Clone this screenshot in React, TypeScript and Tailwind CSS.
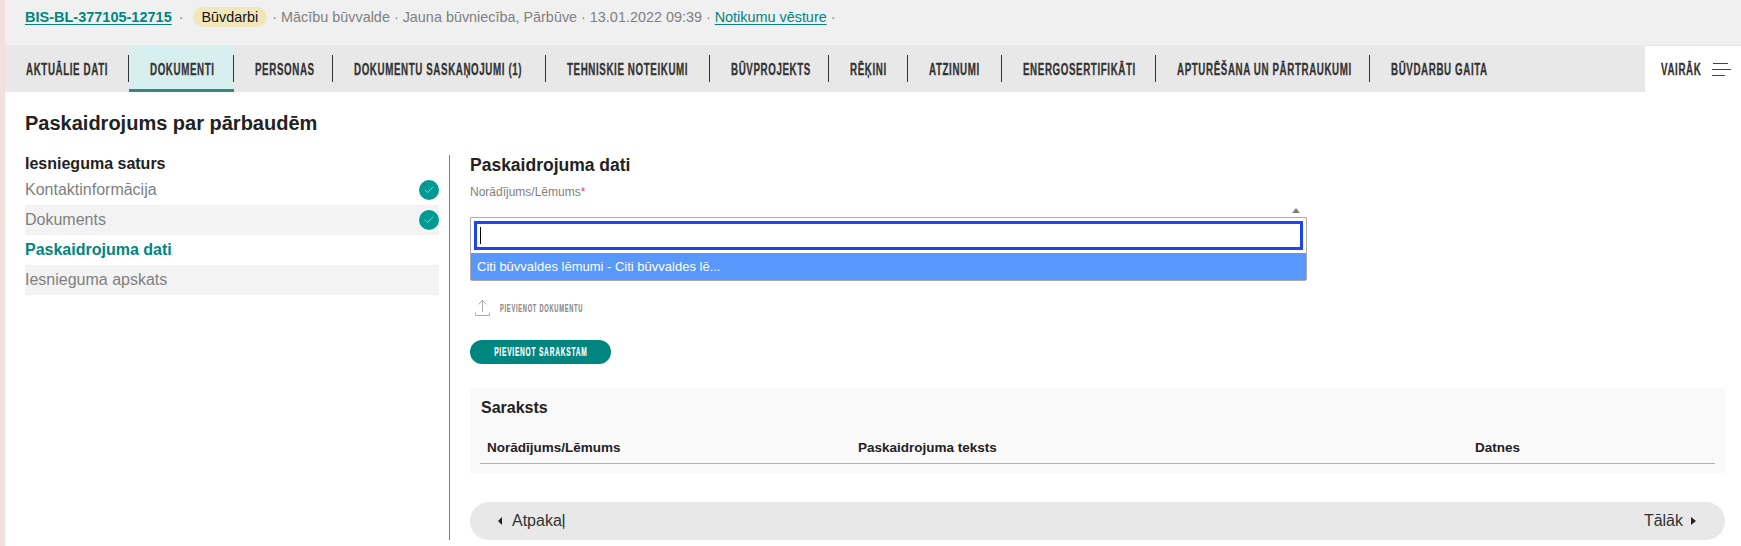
import React from 'react';
import { Check } from 'lucide-react';

const tabs = [
  { label: 'AKTUĀLIE DATI', cls: 'w-[124px]' },
  { label: 'DOKUMENTI', cls: 'w-[105px]', active: true },
  { label: 'PERSONAS', cls: 'w-[99px]' },
  { label: 'DOKUMENTU SASKAŅOJUMI (1)', cls: 'w-[213px]' },
  { label: 'TEHNISKIE NOTEIKUMI', cls: 'w-[164px]' },
  { label: 'BŪVPROJEKTS', cls: 'w-[119px]' },
  { label: 'RĒĶINI', cls: 'w-[79px]' },
  { label: 'ATZINUMI', cls: 'w-[94px]' },
  { label: 'ENERGOSERTIFIKĀTI', cls: 'w-[154px]' },
  { label: 'APTURĒŠANA UN PĀRTRAUKUMI', cls: 'w-[214px]' },
  { label: 'BŪVDARBU GAITA', cls: 'w-[160px]', last: true },
];

const steps = [
  { label: 'Kontaktinformācija', done: true },
  { label: 'Dokuments', done: true, shaded: true },
  { label: 'Paskaidrojuma dati', current: true },
  { label: 'Iesnieguma apskats', shaded: true },
];

const arial = "font-['Liberation_Sans',Arial,sans-serif]";
const tabText =
  "inline-block origin-left scale-x-[0.61] whitespace-nowrap pt-[2px] text-[16px] font-bold tracking-[1px] text-[#333] [-webkit-text-stroke:0.3px_#333]";

export default function App() {
  return (
    <div className={`h-[546px] w-[1741px] overflow-hidden border-l-[5px] border-[#f3dfdf] bg-white text-[#222] ${arial}`}>
      {/* augšējā josla */}
      <div className="flex h-[45px] items-start bg-[#f0f0f0] pl-[20px] pt-[7px] text-[14.4px] leading-[20px] text-[#808080]">
        <a className="text-[14.5px] font-bold text-[#00857f] underline underline-offset-2">BIS-BL-377105-12715</a>
        <span className="ml-[7px]">·</span>
        <span className="ml-[9px] rounded-full bg-[#f2e6bd] px-[9px] text-[#111]">Būvdarbi</span>
        <span className="ml-[5px]">· Mācību būvvalde · Jauna būvniecība, Pārbūve · 13.01.2022 09:39 ·</span>
        <span className="ml-[4px] text-[#00857f] underline underline-offset-2">Notikumu vēsture</span>
        <span className="ml-[4px]">·</span>
      </div>

      {/* cilnes */}
      <div className="flex h-[47px] bg-[#e8e8e8]">
        <div className="flex flex-1 items-center">
          {tabs.map((t) => (
            <div
              key={t.label}
              className={`${t.cls} flex h-full shrink-0 items-center ${t.active ? 'bg-[#d8efef] shadow-[inset_0_-3px_0_#3a8480]' : ''}`}
            >
              <div className={`flex h-[27px] w-full items-center pl-[21px] ${t.last ? '' : 'border-r border-[#333]'} ${t.label === 'AKTUĀLIE DATI' ? 'pl-[20px]' : ''}`}>
                <span className={tabText}>{t.label}</span>
              </div>
            </div>
          ))}
        </div>
        <div className="mt-px flex w-[96px] items-center bg-white pl-[16px]">
          <span className="w-[40px]">
            <span className={tabText}>VAIRĀK</span>
          </span>
          <svg className="ml-[11px]" width="19" height="14" viewBox="0 0 19 14" fill="none" stroke="#444" strokeWidth="1">
            <path d="M1 1.5h15M0 7.5h19M0 13.5h13" />
          </svg>
        </div>
      </div>

      <div className="pl-[20px]">
        <h1 className="pt-[19px] text-[20px] font-bold leading-[24px] text-[#222]">Paskaidrojums par pārbaudēm</h1>

        <div className="mt-[20px] flex">
          {/* kreisā kolonna */}
          <div className="w-[414px] shrink-0">
            <div className="text-[16px] font-bold leading-[18px]">Iesnieguma saturs</div>
            <div className="mt-[2px]">
              {steps.map((s) => (
                <div
                  key={s.label}
                  className={`flex h-[30px] items-center justify-between text-[16px] ${s.shaded ? 'bg-[#f3f3f3]' : ''} ${s.current ? 'font-bold text-[#00857f]' : 'text-[#808080]'}`}
                >
                  <span>{s.label}</span>
                  {s.done && (
                    <span className="flex h-[20px] w-[20px] items-center justify-center rounded-full bg-[#009a93]">
                      <Check size={12} strokeWidth={1} color="#fff" />
                    </span>
                  )}
                </div>
              ))}
            </div>
          </div>

          {/* labā kolonna */}
          <div className="ml-[10px] h-[385px] flex-1 border-l border-[#808080] pl-[20px]">
            <h2 className="text-[17.5px] font-bold leading-[20px] text-[#222]">Paskaidrojuma dati</h2>
            <div className="mt-[9px] text-[12px] leading-[16px] text-[#808080]">
              Norādījums/Lēmums<span className="text-[#e0408a]">*</span>
            </div>

            <div className="flex h-[17px] w-[837px] items-end justify-end pb-[4px] pr-[7px]">
              <span className="h-0 w-0 border-x-[4px] border-b-[5px] border-x-transparent border-b-[#808080]" />
            </div>

            <div className="w-[837px] rounded-b-[2px] border border-[#aaa] bg-white">
              <div className="p-[3px]">
                <div className="flex h-[29px] items-center border-[3px] border-[#1c44f0] pl-[3px]">
                  <span className="h-[17px] w-px bg-black" />
                </div>
              </div>
              <div className="flex h-[27px] items-center bg-[#5897fb] px-[6px] text-[13px] text-white">
                Citi būvvaldes lēmumi - Citi būvvaldes lē...
              </div>
            </div>

            <div className="mt-[19px] flex h-[16px] items-center pl-[5px]">
              <svg width="15" height="16" viewBox="0 0 15 16" fill="none" stroke="#aaa" strokeWidth="1">
                <path d="M7.5 12V0.5M3.5 4.5l4-4 4 4M0.5 12.5v3h14v-3" />
              </svg>
              <span className="ml-[10px] inline-block origin-left scale-x-[0.52] whitespace-nowrap text-[11px] font-bold tracking-[1.4px] text-[#888] [-webkit-text-stroke:0.2px_#888]">
                PIEVIENOT DOKUMENTU
              </span>
            </div>

            <div className="mt-[24px] flex h-[24px] w-[141px] items-center justify-center rounded-full bg-[#00857f]">
              <span className="inline-block shrink-0 scale-x-[0.55] whitespace-nowrap text-[12px] font-bold tracking-[1.4px] text-white [-webkit-text-stroke:0.2px_#fff]">
                PIEVIENOT SARAKSTAM
              </span>
            </div>

            <div className="mt-[24px] h-[85px] w-[1255px] bg-[#f9f9f9] px-[10px]">
              <div className="pl-[1px] pt-[10px] text-[16px] font-bold leading-[20px]">Saraksts</div>
              <div className="mt-[15px] flex h-[31px] items-center border-b border-[#b3b3b3] text-[13.5px] font-bold">
                <span className="ml-[7px] w-[371px]">Norādījums/Lēmums</span>
                <span className="w-[617px]">Paskaidrojuma teksts</span>
                <span>Datnes</span>
              </div>
            </div>

            <div className="mt-[29px] flex h-[38px] w-[1255px] items-center justify-between rounded-full bg-[#e8e8e8] pl-[28px] pr-[29px] text-[16px] text-[#333]">
              <div className="flex items-center gap-[10px]">
                <span className="h-0 w-0 border-y-[4px] border-r-[4px] border-y-transparent border-r-[#222]" />
                <span>Atpakaļ</span>
              </div>
              <div className="flex items-center gap-[8px]">
                <span>Tālāk</span>
                <span className="h-0 w-0 border-y-[4px] border-l-[5px] border-y-transparent border-l-[#222]" />
              </div>
            </div>
          </div>
        </div>
      </div>
    </div>
  );
}
